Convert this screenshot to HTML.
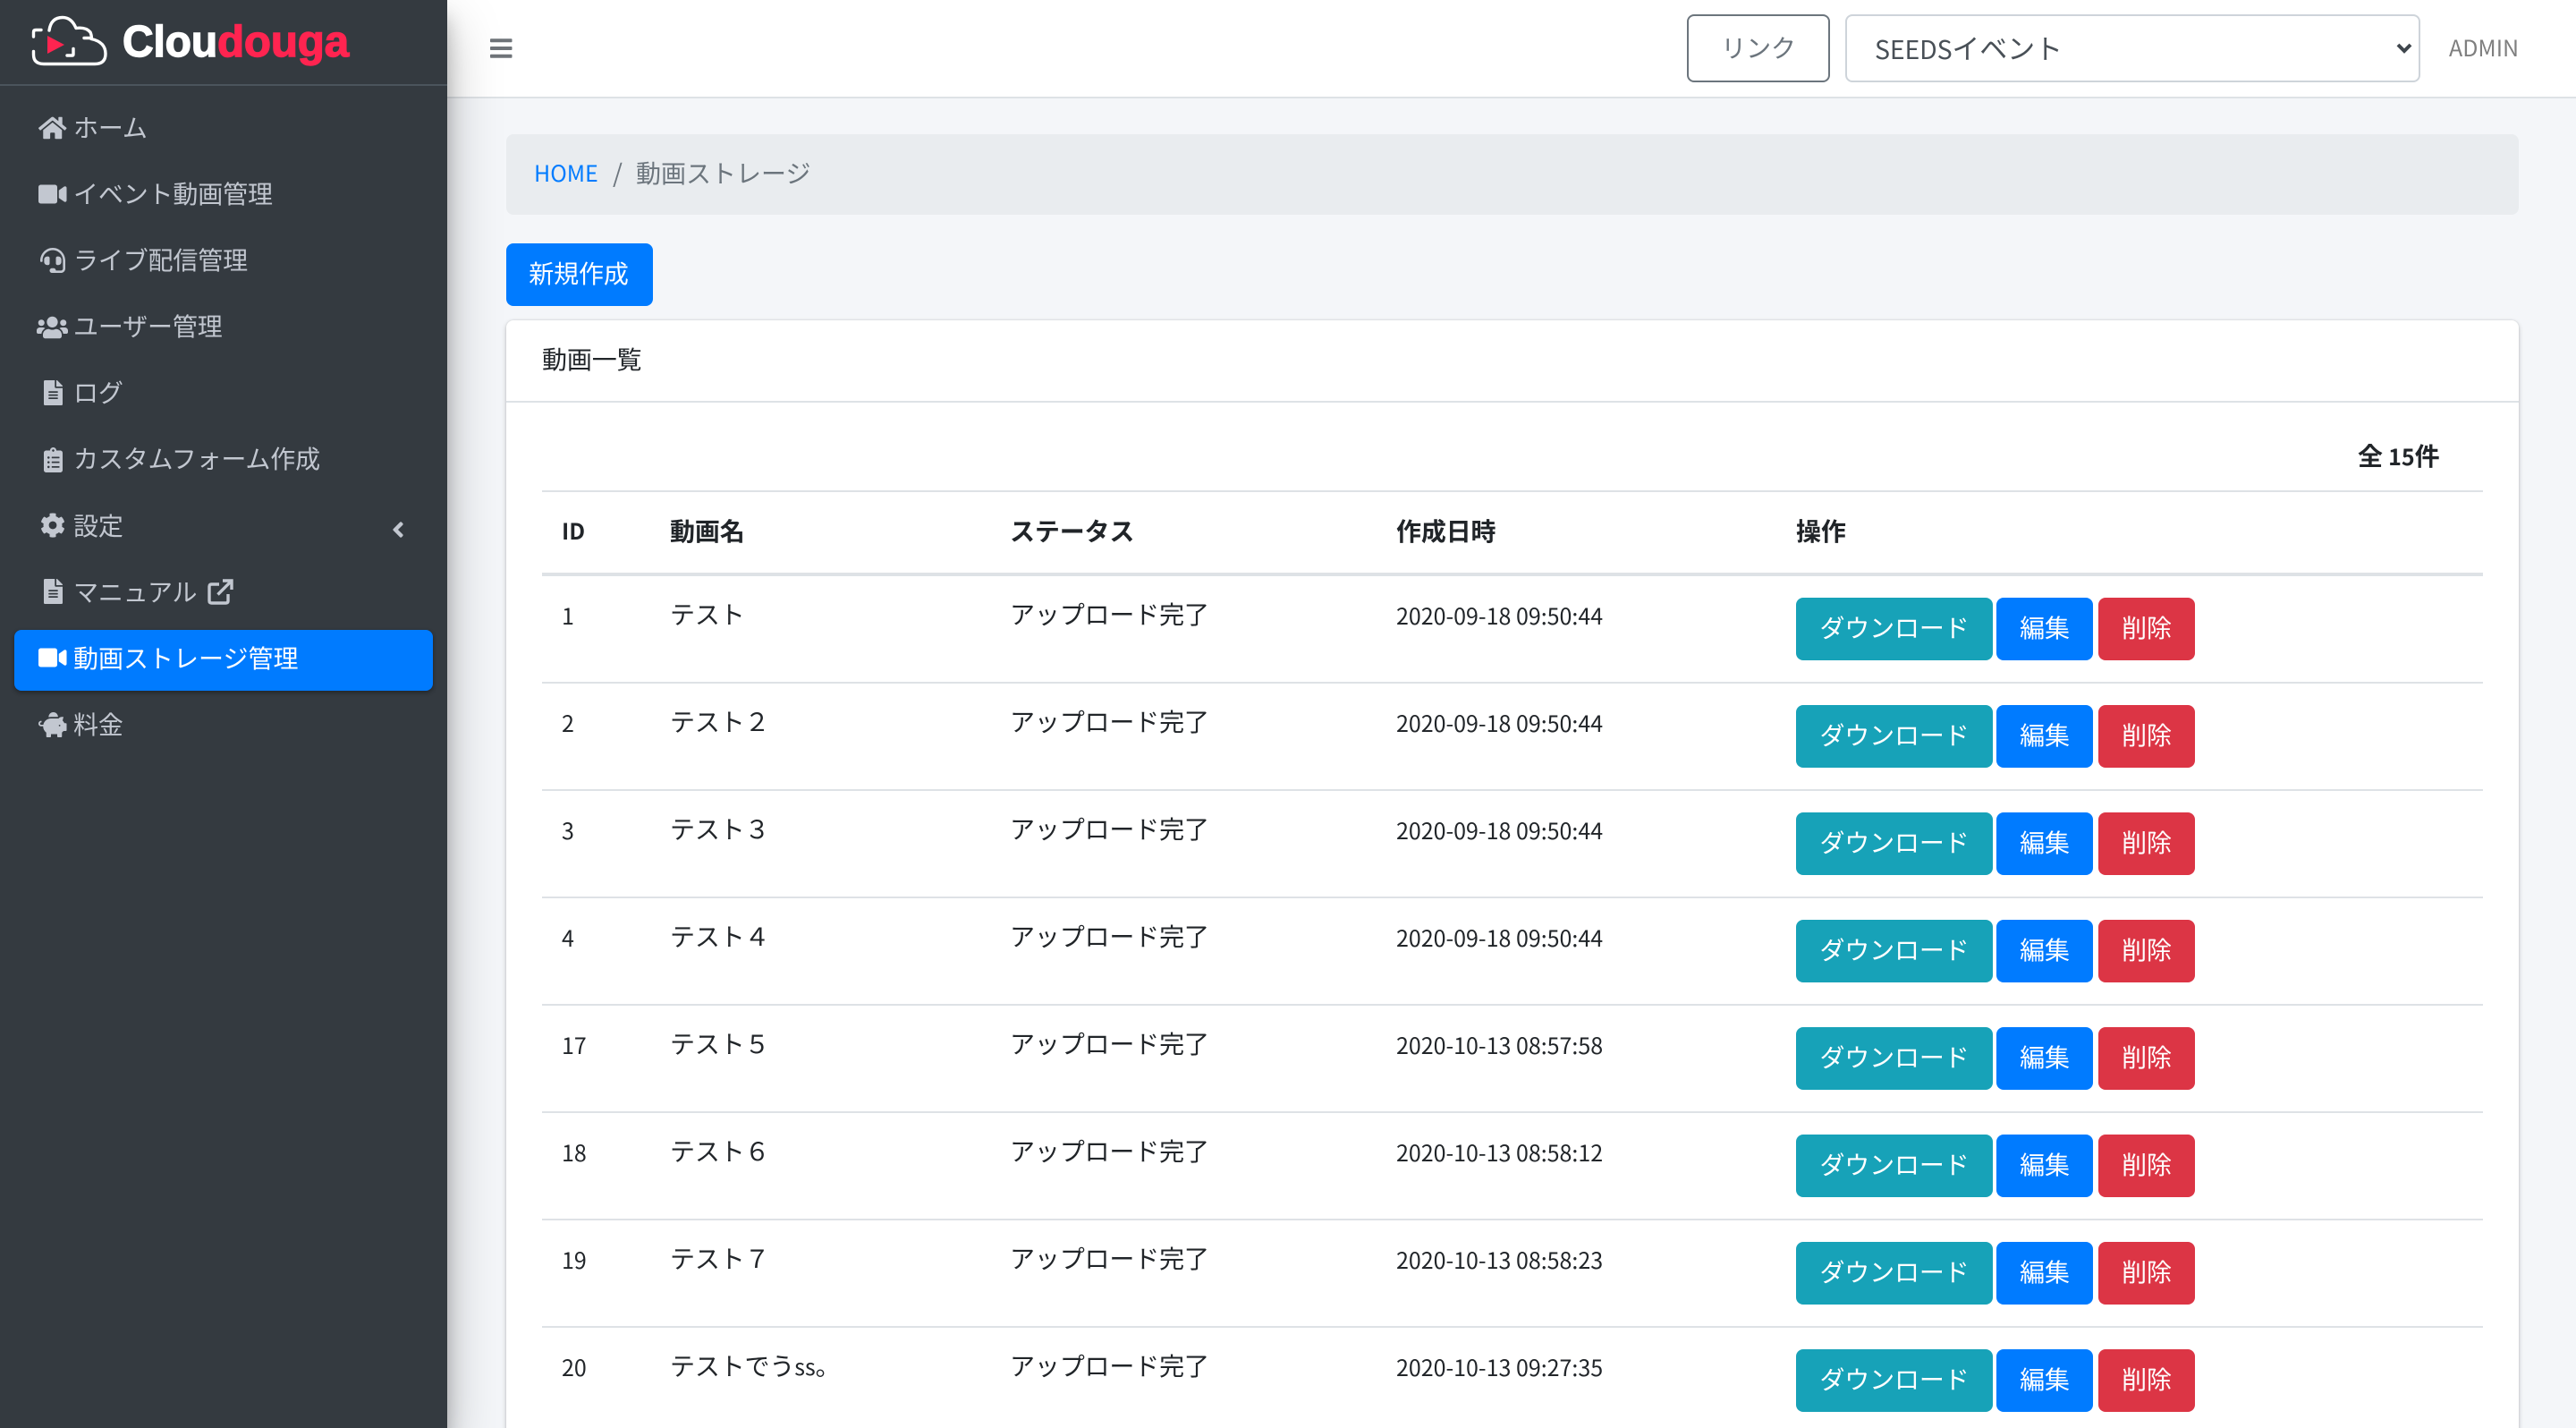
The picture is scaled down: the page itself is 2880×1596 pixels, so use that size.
<!DOCTYPE html>
<html lang="ja"><head><meta charset="utf-8"><title>動画ストレージ</title>
<style>
*{box-sizing:border-box;margin:0;padding:0}
html,body{width:2880px;height:1596px;overflow:hidden;background:#f4f6f9}
body{position:relative;font-family:"Noto Sans CJK JP","Liberation Sans",sans-serif;font-size:28px;color:#212529;letter-spacing:-.15px}
.a{position:absolute;white-space:nowrap}
.t{position:absolute;white-space:nowrap;height:40px;line-height:40px}
.l{font-size:25px;letter-spacing:0}
#side{position:absolute;left:0;top:0;width:500px;height:1596px;background:#343a40;z-index:5;box-shadow:0 28px 56px rgba(0,0,0,.25),0 20px 20px rgba(0,0,0,.22)}
#side .t{left:82px;color:#c2c7d0}
#side svg,.ic{position:absolute;fill:#c2c7d0}
#head{position:absolute;left:500px;top:0;width:2380px;height:110px;background:#fff;border-bottom:2px solid #dee2e6}
#card{position:absolute;left:566px;top:358px;width:2250px;height:1300px;background:#fff;border-radius:8px;box-shadow:0 0 2px rgba(0,0,0,.125),0 2px 6px rgba(0,0,0,.2)}
.ln{position:absolute;left:606px;width:2170px;height:2px;background:#dee2e6}
.b{position:absolute;height:70px;line-height:66px;text-align:center;color:#fff;border-radius:8px;font-size:28px}
.i{background:#17a2b8;left:2008px;width:220px}
.e{background:#007bff;left:2232px;width:108px}
.d{background:#dc3545;left:2346px;width:108px}
.r{position:absolute;left:0;top:0;width:2880px;height:120px}
.r .t{top:666px}
.r .t.l{top:668px}
.c1{left:628px}.c2{left:749px}.c3{left:1129px}.c4{left:1561px}
.hd{font-weight:700;top:573px}
</style></head><body>

<div id="head"></div>
<svg class="a" style="left:548px;top:40px" width="24.5" height="28" viewBox="0 0 448 512" fill="#6f7479"><path d="M16 132h416c8.837 0 16-7.163 16-16V76c0-8.837-7.163-16-16-16H16C7.163 60 0 67.163 0 76v40c0 8.837 7.163 16 16 16zm0 160h416c8.837 0 16-7.163 16-16v-40c0-8.837-7.163-16-16-16H16c-8.837 0-16 7.163-16 16v40c0 8.837 7.163 16 16 16zm0 160h416c8.837 0 16-7.163 16-16v-40c0-8.837-7.163-16-16-16H16c-8.837 0-16 7.163-16 16v40c0 8.837 7.163 16 16 16z"/></svg>
<div class="a" style="left:1886px;top:16px;width:160px;height:76px;border:2px solid #6c757d;border-radius:8px;line-height:70px;text-align:center;color:#6c757d">リンク</div>
<div class="a" style="left:2063px;top:16px;width:643px;height:76px;border:2px solid #ced4da;border-radius:8px;background:#fff;padding-left:31px;line-height:70px;font-size:31px;color:#495057"><span style="font-size:28.500px">SEEDS</span>イベント</div>
<svg class="a" style="left:2679px;top:47px" width="18" height="14" viewBox="0 0 18 14"><path d="M2 3l7 7 7-7" fill="none" stroke="#3f464d" stroke-width="4"/></svg>
<div class="t l" style="left:2738px;top:33px;color:#7f7f7f">ADMIN</div>

<div class="a" style="left:566px;top:150px;width:2250px;height:90px;background:#e9ecef;border-radius:8px"></div>
<div class="t l" style="left:597px;top:173px;color:#007bff">HOME</div>
<div class="t" style="left:685px;top:173px;color:#6c757d">/</div>
<div class="t" style="left:711px;top:173px;color:#6c757d;letter-spacing:0">動画ストレージ</div>

<div class="b" style="left:566px;top:272px;width:164px;background:#007bff;line-height:66px;padding-right:2px">新規作成</div>

<div id="card"></div>
<div class="a" style="left:566px;top:448px;width:2250px;height:2px;background:#dee2e6"></div>
<div class="t" style="left:606px;top:381px">動画一覧</div>
<div class="t" style="left:2636px;top:489px;font-weight:700">全 <span class="l">15</span>件</div>

<div class="ln" style="top:548px"></div>
<div class="ln" style="top:640px;height:4px"></div>
<div class="t hd c1 l">ID</div><div class="t hd c2">動画名</div><div class="t hd c3">ステータス</div><div class="t hd c4">作成日時</div><div class="t hd" style="left:2008px">操作</div>

<div class="r" style="top:0"><div class="t c1 l">1</div><div class="t c2">テスト</div><div class="t c3">アップロード完了</div><div class="t c4 l">2020-09-18 09:50:44</div><div class="b i" style="top:668px">ダウンロード</div><div class="b e" style="top:668px">編集</div><div class="b d" style="top:668px">削除</div></div>
<div class="ln" style="top:762px"></div>
<div class="r" style="top:120px"><div class="t c1 l">2</div><div class="t c2">テスト２</div><div class="t c3">アップロード完了</div><div class="t c4 l">2020-09-18 09:50:44</div><div class="b i" style="top:668px">ダウンロード</div><div class="b e" style="top:668px">編集</div><div class="b d" style="top:668px">削除</div></div>
<div class="ln" style="top:882px"></div>
<div class="r" style="top:240px"><div class="t c1 l">3</div><div class="t c2">テスト３</div><div class="t c3">アップロード完了</div><div class="t c4 l">2020-09-18 09:50:44</div><div class="b i" style="top:668px">ダウンロード</div><div class="b e" style="top:668px">編集</div><div class="b d" style="top:668px">削除</div></div>
<div class="ln" style="top:1002px"></div>
<div class="r" style="top:360px"><div class="t c1 l">4</div><div class="t c2">テスト４</div><div class="t c3">アップロード完了</div><div class="t c4 l">2020-09-18 09:50:44</div><div class="b i" style="top:668px">ダウンロード</div><div class="b e" style="top:668px">編集</div><div class="b d" style="top:668px">削除</div></div>
<div class="ln" style="top:1122px"></div>
<div class="r" style="top:480px"><div class="t c1 l">17</div><div class="t c2">テスト５</div><div class="t c3">アップロード完了</div><div class="t c4 l">2020-10-13 08:57:58</div><div class="b i" style="top:668px">ダウンロード</div><div class="b e" style="top:668px">編集</div><div class="b d" style="top:668px">削除</div></div>
<div class="ln" style="top:1242px"></div>
<div class="r" style="top:600px"><div class="t c1 l">18</div><div class="t c2">テスト６</div><div class="t c3">アップロード完了</div><div class="t c4 l">2020-10-13 08:58:12</div><div class="b i" style="top:668px">ダウンロード</div><div class="b e" style="top:668px">編集</div><div class="b d" style="top:668px">削除</div></div>
<div class="ln" style="top:1362px"></div>
<div class="r" style="top:720px"><div class="t c1 l">19</div><div class="t c2">テスト７</div><div class="t c3">アップロード完了</div><div class="t c4 l">2020-10-13 08:58:23</div><div class="b i" style="top:668px">ダウンロード</div><div class="b e" style="top:668px">編集</div><div class="b d" style="top:668px">削除</div></div>
<div class="ln" style="top:1482px"></div>
<div class="r" style="top:840px"><div class="t c1 l">20</div><div class="t c2">テストでう<span class="l">ss</span>。</div><div class="t c3">アップロード完了</div><div class="t c4 l">2020-10-13 09:27:35</div><div class="b i" style="top:668px">ダウンロード</div><div class="b e" style="top:668px">編集</div><div class="b d" style="top:668px">削除</div></div>

<div id="side">
<svg style="left:0;top:0;fill:none" width="500" height="94" viewBox="0 0 500 94">
<g fill="none" stroke="#fff" stroke-width="3.4" stroke-linecap="round" stroke-linejoin="round">
<path d="M46 33.500H40Q37.500 33.500 37.500 36V41"/>
<path d="M37.500 57.500V61Q37.500 71.500 49 71.500H106Q118 71.500 118 60Q118 47 102 43.500Q103 41 101 36Q96 30 85 31.500Q80 19.500 70 19.500Q57 19.500 55 34"/>
<path d="M94 42.500H102"/>
<path d="M75 62H81Q82 62 82 60.500V54.500"/>
</g>
<path d="M53 40L72 50L53 60Z" fill="#ff2450"/>
<text x="137" y="63" font-family="Liberation Sans" font-weight="700" font-size="49" fill="#fff" stroke="#fff" stroke-width="1.4" textLength="106" lengthAdjust="spacingAndGlyphs">Clou</text>
<text x="243" y="63" font-family="Liberation Sans" font-weight="700" font-size="49" fill="#ff2450" stroke="#ff2450" stroke-width="1.4" textLength="147" lengthAdjust="spacingAndGlyphs">douga</text>
</svg>
<div class="a" style="left:0;top:94px;width:500px;height:2px;background:#4b545c"></div>

<svg style="left:43px;top:129px" width="31.500" height="28" viewBox="0 0 576 512"><path d="M280.37 148.26L96 300.11V464a16 16 0 0 0 16 16l112.06-.29a16 16 0 0 0 15.92-16V368a16 16 0 0 1 16-16h64a16 16 0 0 1 16 16v95.64a16 16 0 0 0 16 16.05L464 480a16 16 0 0 0 16-16V300L295.67 148.26a12.19 12.19 0 0 0-15.3 0zM571.6 251.47L488 182.56V44.05a12 12 0 0 0-12-12h-56a12 12 0 0 0-12 12v72.61L318.47 43a48 48 0 0 0-61 0L4.34 251.47a12 12 0 0 0-1.6 16.9l25.5 31A12 12 0 0 0 45.15 301l235.22-193.74a12.19 12.19 0 0 1 15.3 0L530.9 301a12 12 0 0 0 16.9-1.6l25.5-31a12 12 0 0 0-1.7-16.93z"/></svg>
<div class="t" style="top:122px">ホーム</div>

<svg style="left:43px;top:203px" width="31.500" height="28" viewBox="0 0 576 512"><path d="M336.2 64H47.8C21.4 64 0 85.4 0 111.8v288.4C0 426.6 21.4 448 47.8 448h288.4c26.4 0 47.8-21.400 47.800-47.800V111.8c0-26.400-21.400-47.800-47.800-47.800zm189.400 37.700L416 177.300v157.400l109.600 75.500c21.200 14.600 50.400-.3 50.400-25.800V127.500c0-25.400-29.100-40.400-50.400-25.800z"/></svg>
<div class="t" style="top:196px">イベント動画管理</div>

<svg style="left:45px;top:277px" width="28" height="28" viewBox="0 0 512 512"><path d="M192 208c0-17.67-14.33-32-32-32h-16c-35.35 0-64 28.65-64 64v48c0 35.35 28.65 64 64 64h16c17.67 0 32-14.33 32-32V208zm176 144c35.35 0 64-28.65 64-64v-48c0-35.35-28.65-64-64-64h-16c-17.67 0-32 14.33-32 32v112c0 17.67 14.33 32 32 32h16zM256 0C113.18 0 4.58 118.83 0 256v16c0 8.84 7.16 16 16 16h16c8.84 0 16-7.16 16-16v-16c0-114.69 93.31-208 208-208s208 93.31 208 208h-.12c.08 2.43.12 165.72.12 165.72 0 23.35-18.93 42.28-42.28 42.28H320c0-26.51-21.49-48-48-48h-32c-26.51 0-48 21.49-48 48s21.49 48 48 48h181.72c49.86 0 90.28-40.42 90.28-90.28V256C507.42 118.83 398.82 0 256 0z"/></svg>
<div class="t" style="top:270px">ライブ配信管理</div>

<svg style="left:41px;top:352px" width="35" height="28" viewBox="0 0 640 512"><path d="M96 224c35.3 0 64-28.7 64-64s-28.7-64-64-64-64 28.7-64 64 28.7 64 64 64zm448 0c35.3 0 64-28.7 64-64s-28.7-64-64-64-64 28.7-64 64 28.7 64 64 64zm32 32h-64c-17.6 0-33.5 7.1-45.1 18.6 40.3 22.1 68.9 62 75.1 109.4h66c17.7 0 32-14.3 32-32v-32c0-35.3-28.7-64-64-64zm-256 0c61.9 0 112-50.1 112-112S381.9 32 320 32 208 82.1 208 144s50.1 112 112 112zm76.8 32h-8.3c-20.8 10-43.9 16-68.5 16s-47.6-6-68.5-16h-8.3C179.6 288 128 339.6 128 403.2V432c0 26.5 21.5 48 48 48h288c26.5 0 48-21.5 48-48v-28.8c0-63.6-51.6-115.2-115.2-115.2zm-223.7-13.4C161.5 263.1 145.6 256 128 256H64c-35.3 0-64 28.7-64 64v32c0 17.7 14.3 32 32 32h65.9c6.3-47.4 34.9-87.3 75.2-109.4z"/></svg>
<div class="t" style="top:344px">ユーザー管理</div>

<svg style="left:48.500px;top:425px" width="21" height="28" viewBox="0 0 384 512"><path d="M224 136V0H24C10.7 0 0 10.7 0 24v464c0 13.3 10.7 24 24 24h336c13.3 0 24-10.7 24-24V160H248c-13.2 0-24-10.8-24-24zm64 236c0 6.6-5.4 12-12 12H108c-6.6 0-12-5.4-12-12v-8c0-6.6 5.4-12 12-12h168c6.6 0 12 5.4 12 12v8zm0-64c0 6.6-5.4 12-12 12H108c-6.6 0-12-5.4-12-12v-8c0-6.6 5.4-12 12-12h168c6.6 0 12 5.4 12 12v8zm0-72v8c0 6.6-5.4 12-12 12H108c-6.6 0-12-5.4-12-12v-8c0-6.6 5.4-12 12-12h168c6.6 0 12 5.4 12 12zm96-114.1v6.1H256V0h6.1c6.4 0 12.5 2.5 17 7l97.9 98c4.5 4.5 7 10.6 7 16.9z"/></svg>
<div class="t" style="top:418px">ログ</div>

<svg style="left:48.500px;top:500px" width="21" height="28" viewBox="0 0 384 512"><path d="M336 64h-80c0-35.3-28.7-64-64-64s-64 28.7-64 64H48C21.5 64 0 85.5 0 112v352c0 26.5 21.5 48 48 48h288c26.5 0 48-21.5 48-48V112c0-26.5-21.5-48-48-48zM96 424c-13.3 0-24-10.7-24-24s10.7-24 24-24 24 10.7 24 24-10.7 24-24 24zm0-96c-13.3 0-24-10.7-24-24s10.7-24 24-24 24 10.7 24 24-10.7 24-24 24zm0-96c-13.3 0-24-10.7-24-24s10.7-24 24-24 24 10.7 24 24-10.7 24-24 24zm96-192c13.3 0 24 10.7 24 24s-10.7 24-24 24-24-10.7-24-24 10.7-24 24-24zm128 368c0 4.4-3.6 8-8 8H168c-4.4 0-8-3.6-8-8v-16c0-4.4 3.6-8 8-8h144c4.4 0 8 3.6 8 8v16zm0-96c0 4.4-3.6 8-8 8H168c-4.4 0-8-3.6-8-8v-16c0-4.4 3.6-8 8-8h144c4.4 0 8 3.6 8 8v16zm0-96c0 4.4-3.6 8-8 8H168c-4.4 0-8-3.6-8-8v-16c0-4.4 3.6-8 8-8h144c4.4 0 8 3.6 8 8v16z"/></svg>
<div class="t" style="top:492px">カスタムフォーム作成</div>

<svg style="left:45px;top:573px" width="28" height="28" viewBox="0 0 512 512"><path d="M487.4 315.7l-42.6-24.6c4.3-23.2 4.3-47 0-70.2l42.6-24.6c4.9-2.8 7.1-8.6 5.5-14-11.1-35.6-30-67.8-54.7-94.6-3.8-4.1-10-5.1-14.8-2.3L380.8 110c-17.9-15.4-38.5-27.3-60.8-35.1V25.8c0-5.6-3.9-10.5-9.4-11.7-36.7-8.2-74.3-7.8-109.2 0-5.5 1.2-9.4 6.1-9.4 11.7V75c-22.2 7.9-42.8 19.8-60.8 35.1L88.7 85.5c-4.9-2.8-11-1.9-14.8 2.3-24.7 26.7-43.6 58.9-54.7 94.6-1.7 5.4.6 11.2 5.5 14L67.3 221c-4.3 23.2-4.3 47 0 70.2l-42.6 24.6c-4.9 2.8-7.1 8.6-5.5 14 11.1 35.6 30 67.8 54.7 94.6 3.8 4.1 10 5.1 14.8 2.3l42.6-24.6c17.9 15.4 38.5 27.3 60.8 35.1v49.2c0 5.6 3.9 10.5 9.4 11.7 36.7 8.2 74.3 7.8 109.2 0 5.5-1.2 9.4-6.1 9.4-11.7v-49.2c22.2-7.9 42.8-19.8 60.8-35.1l42.6 24.6c4.9 2.8 11 1.9 14.8-2.3 24.7-26.7 43.6-58.9 54.7-94.6 1.5-5.5-.7-11.3-5.6-14.1zM256 336c-44.1 0-80-35.9-80-80s35.9-80 80-80 80 35.9 80 80-35.9 80-80 80z"/></svg>
<div class="t" style="top:567px">設定</div>
<svg style="left:438px;top:578px" width="14" height="28" viewBox="0 0 256 512"><path d="M31.7 239l136-136c9.4-9.4 24.6-9.4 33.9 0l22.6 22.6c9.4 9.4 9.4 24.6 0 33.9L127.9 256l96.4 96.4c9.4 9.4 9.4 24.6 0 33.9L201.7 409c-9.4 9.4-24.6 9.4-33.9 0l-136-136c-9.5-9.4-9.5-24.6-.1-34z"/></svg>

<svg style="left:48.500px;top:647px" width="21" height="28" viewBox="0 0 384 512"><path d="M224 136V0H24C10.7 0 0 10.7 0 24v464c0 13.3 10.7 24 24 24h336c13.3 0 24-10.7 24-24V160H248c-13.2 0-24-10.8-24-24zm64 236c0 6.6-5.4 12-12 12H108c-6.6 0-12-5.4-12-12v-8c0-6.6 5.4-12 12-12h168c6.6 0 12 5.4 12 12v8zm0-64c0 6.6-5.4 12-12 12H108c-6.6 0-12-5.4-12-12v-8c0-6.6 5.4-12 12-12h168c6.6 0 12 5.4 12 12v8zm0-72v8c0 6.6-5.4 12-12 12H108c-6.6 0-12-5.4-12-12v-8c0-6.6 5.4-12 12-12h168c6.6 0 12 5.4 12 12zm96-114.1v6.1H256V0h6.1c6.4 0 12.5 2.5 17 7l97.9 98c4.5 4.5 7 10.6 7 16.9z"/></svg>
<div class="t" style="top:641px">マニュアル</div>
<svg style="left:232px;top:647px;fill:none" width="29" height="29" viewBox="0 0 29 29"><g fill="none" stroke="#c2c7d0" stroke-width="3.400"><path d="M13 6H4.500Q2 6 2 8.500V24.500Q2 27 4.500 27H20.500Q23 27 23 24.500V17"/><path d="M11.500 17.500L26 3"/><path d="M17 2H27V12"/></g></svg>

<div class="a" style="left:16px;top:704px;width:468px;height:68px;background:#007bff;border-radius:8px;box-shadow:0 2px 6px rgba(0,0,0,.2),0 2px 4px rgba(0,0,0,.19)"></div>
<svg style="left:43px;top:721px;fill:#fff" width="31.500" height="28" viewBox="0 0 576 512"><path d="M336.2 64H47.8C21.4 64 0 85.4 0 111.8v288.4C0 426.6 21.4 448 47.8 448h288.4c26.4 0 47.8-21.400 47.800-47.800V111.8c0-26.400-21.400-47.800-47.800-47.800zm189.400 37.700L416 177.300v157.400l109.600 75.500c21.200 14.600 50.400-.3 50.400-25.800V127.500c0-25.400-29.100-40.400-50.400-25.800z"/></svg>
<div class="t" style="top:715px;letter-spacing:0"><span style="color:#fff">動画ストレージ管理</span></div>

<svg style="left:43px;top:796px" width="31.500" height="28" viewBox="0 0 576 512"><path d="M560 224h-29.500c-8.800-20-21.600-37.700-37.400-52.500L512 96h-32c-29.400 0-55.400 13.500-73 34.300-7.600-1.100-15.100-2.300-23-2.300H256c-77.400 0-141.900 55-156.800 128H56c-14.800 0-26.500-13.500-23.500-28.800C34.700 215.800 45.400 208 57 208h1c3.300 0 6-2.700 6-6v-20c0-3.300-2.700-6-6-6-28.500 0-53.900 20.400-57.500 48.600C-3.900 258.800 22.700 288 56 288h40c0 52.200 25.400 98.100 64 127.300V496c0 8.800 7.200 16 16 16h64c8.800 0 16-7.200 16-16v-48h128v48c0 8.800 7.200 16 16 16h64c8.800 0 16-7.200 16-16v-80.700c11.800-8.900 22.300-19.400 31.300-31.300H560c8.800 0 16-7.200 16-16V240c0-8.800-7.200-16-16-16zm-128 64c-8.800 0-16-7.200-16-16s7.200-16 16-16 16 7.200 16 16-7.200 16-16 16zM256 96h128c5.400 0 10.700.4 15.900.8 0-.3.100-.5.100-.8 0-53-43-96-96-96s-96 43-96 96c0 2.100.5 4.100.6 6.200 15.200-3.900 31-6.200 47.400-6.200z"/></svg>
<div class="t" style="top:789px">料金</div>
</div>
</body></html>
